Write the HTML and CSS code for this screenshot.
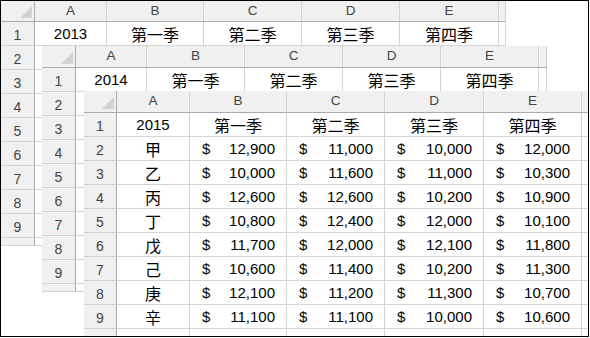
FILE: index.html
```html
<!DOCTYPE html>
<html lang="zh-Hant">
<head>
<meta charset="utf-8">
<title>Sheets</title>
<link rel="stylesheet" href="styles.css">
</head>
<body>
<div class="frame">

  <div class="sheet s1">
    <div class="corner"><svg viewBox="0 0 12 12" width="12" height="12"><polygon points="12,0 12,12 0,12" fill="#d3d3d3"/></svg></div>
    <div class="h">A</div><div class="h">B</div><div class="h">C</div><div class="h">D</div><div class="h">E</div><div class="h"></div>
    <div class="r">1</div><div class="c ctr">2013</div><div class="c ctr cjk">第一季</div><div class="c ctr cjk">第二季</div><div class="c ctr cjk">第三季</div><div class="c ctr cjk">第四季</div><div class="c"></div>
    <div class="r">2</div><div class="c"></div><div class="c"></div><div class="c"></div><div class="c"></div><div class="c"></div><div class="c"></div>
    <div class="r">3</div><div class="c"></div><div class="c"></div><div class="c"></div><div class="c"></div><div class="c"></div><div class="c"></div>
    <div class="r">4</div><div class="c"></div><div class="c"></div><div class="c"></div><div class="c"></div><div class="c"></div><div class="c"></div>
    <div class="r">5</div><div class="c"></div><div class="c"></div><div class="c"></div><div class="c"></div><div class="c"></div><div class="c"></div>
    <div class="r">6</div><div class="c"></div><div class="c"></div><div class="c"></div><div class="c"></div><div class="c"></div><div class="c"></div>
    <div class="r">7</div><div class="c"></div><div class="c"></div><div class="c"></div><div class="c"></div><div class="c"></div><div class="c"></div>
    <div class="r">8</div><div class="c"></div><div class="c"></div><div class="c"></div><div class="c"></div><div class="c"></div><div class="c"></div>
    <div class="r">9</div><div class="c"></div><div class="c"></div><div class="c"></div><div class="c"></div><div class="c"></div><div class="c"></div>
    <div class="r"></div><div class="c"></div><div class="c"></div><div class="c"></div><div class="c"></div><div class="c"></div><div class="c"></div>
  </div>

  <div class="sheet s2">
    <div class="corner"><svg viewBox="0 0 12 12" width="12" height="12"><polygon points="12,0 12,12 0,12" fill="#d3d3d3"/></svg></div>
    <div class="h">A</div><div class="h">B</div><div class="h">C</div><div class="h">D</div><div class="h">E</div><div class="h"></div>
    <div class="r">1</div><div class="c ctr">2014</div><div class="c ctr cjk">第一季</div><div class="c ctr cjk">第二季</div><div class="c ctr cjk">第三季</div><div class="c ctr cjk">第四季</div><div class="c"></div>
    <div class="r">2</div><div class="c"></div><div class="c"></div><div class="c"></div><div class="c"></div><div class="c"></div><div class="c"></div>
    <div class="r">3</div><div class="c"></div><div class="c"></div><div class="c"></div><div class="c"></div><div class="c"></div><div class="c"></div>
    <div class="r">4</div><div class="c"></div><div class="c"></div><div class="c"></div><div class="c"></div><div class="c"></div><div class="c"></div>
    <div class="r">5</div><div class="c"></div><div class="c"></div><div class="c"></div><div class="c"></div><div class="c"></div><div class="c"></div>
    <div class="r">6</div><div class="c"></div><div class="c"></div><div class="c"></div><div class="c"></div><div class="c"></div><div class="c"></div>
    <div class="r">7</div><div class="c"></div><div class="c"></div><div class="c"></div><div class="c"></div><div class="c"></div><div class="c"></div>
    <div class="r">8</div><div class="c"></div><div class="c"></div><div class="c"></div><div class="c"></div><div class="c"></div><div class="c"></div>
    <div class="r">9</div><div class="c"></div><div class="c"></div><div class="c"></div><div class="c"></div><div class="c"></div><div class="c"></div>
    <div class="r"></div><div class="c"></div><div class="c"></div><div class="c"></div><div class="c"></div><div class="c"></div><div class="c"></div>
  </div>

  <div class="sheet s3">
    <div class="corner"><svg viewBox="0 0 12 12" width="12" height="12"><polygon points="12,0 12,12 0,12" fill="#d3d3d3"/></svg></div>
    <div class="h">A</div><div class="h">B</div><div class="h">C</div><div class="h">D</div><div class="h">E</div><div class="h"></div>
    <div class="r">1</div><div class="c ctr">2015</div><div class="c ctr cjk">第一季</div><div class="c ctr cjk">第二季</div><div class="c ctr cjk">第三季</div><div class="c ctr cjk">第四季</div><div class="c"></div>
    <div class="r">2</div><div class="c ctr cjk">甲</div><div class="c acc"><span>$</span><span>12,900</span></div><div class="c acc"><span>$</span><span>11,000</span></div><div class="c acc"><span>$</span><span>10,000</span></div><div class="c acc"><span>$</span><span>12,000</span></div><div class="c"></div>
    <div class="r">3</div><div class="c ctr cjk">乙</div><div class="c acc"><span>$</span><span>10,000</span></div><div class="c acc"><span>$</span><span>11,600</span></div><div class="c acc"><span>$</span><span>11,000</span></div><div class="c acc"><span>$</span><span>10,300</span></div><div class="c"></div>
    <div class="r">4</div><div class="c ctr cjk">丙</div><div class="c acc"><span>$</span><span>12,600</span></div><div class="c acc"><span>$</span><span>12,600</span></div><div class="c acc"><span>$</span><span>10,200</span></div><div class="c acc"><span>$</span><span>10,900</span></div><div class="c"></div>
    <div class="r">5</div><div class="c ctr cjk">丁</div><div class="c acc"><span>$</span><span>10,800</span></div><div class="c acc"><span>$</span><span>12,400</span></div><div class="c acc"><span>$</span><span>12,000</span></div><div class="c acc"><span>$</span><span>10,100</span></div><div class="c"></div>
    <div class="r">6</div><div class="c ctr cjk">戊</div><div class="c acc"><span>$</span><span>11,700</span></div><div class="c acc"><span>$</span><span>12,000</span></div><div class="c acc"><span>$</span><span>12,100</span></div><div class="c acc"><span>$</span><span>11,800</span></div><div class="c"></div>
    <div class="r">7</div><div class="c ctr cjk">己</div><div class="c acc"><span>$</span><span>10,600</span></div><div class="c acc"><span>$</span><span>11,400</span></div><div class="c acc"><span>$</span><span>10,200</span></div><div class="c acc"><span>$</span><span>11,300</span></div><div class="c"></div>
    <div class="r">8</div><div class="c ctr cjk">庚</div><div class="c acc"><span>$</span><span>12,100</span></div><div class="c acc"><span>$</span><span>11,200</span></div><div class="c acc"><span>$</span><span>11,300</span></div><div class="c acc"><span>$</span><span>10,700</span></div><div class="c"></div>
    <div class="r">9</div><div class="c ctr cjk">辛</div><div class="c acc"><span>$</span><span>11,100</span></div><div class="c acc"><span>$</span><span>11,100</span></div><div class="c acc"><span>$</span><span>10,000</span></div><div class="c acc"><span>$</span><span>10,600</span></div><div class="c"></div>
    <div class="r"></div><div class="c"></div><div class="c"></div><div class="c"></div><div class="c"></div><div class="c"></div><div class="c"></div>
  </div>

</div>
</body>
</html>
```

FILE: styles.css
```css
html, body {
  margin: 0;
  padding: 0;
  background: #fff;
}

.frame {
  position: relative;
  width: 589px;
  height: 337px;
  box-sizing: border-box;
  border: 1px solid #000;
  overflow: hidden;
  background: #fff;
  font-family: "Liberation Sans", "Noto Sans CJK TC", sans-serif;
  color: #000;
}

.sheet {
  position: absolute;
  display: grid;
  background: #fff;
}

.s1 {
  left: 0;
  top: 0;
  grid-template-columns: 34px 72px 97px 98px 98px 99px 7px;
  grid-template-rows: 21px repeat(9, 24px) 8px;
}

.s2 {
  left: 41px;
  top: 45px;
  grid-template-columns: 34px 71px 98px 98px 98px 98px 8px;
  grid-template-rows: 22px repeat(9, 24px) 8px;
}

.s3 {
  left: 83px;
  top: 90px;
  grid-template-columns: 33px 73px 97px 98px 99px 98px 10px;
  grid-template-rows: 22px repeat(9, 24px) 10px;
}

.sheet > div {
  box-sizing: border-box;
  min-width: 0;
  overflow: hidden;
  white-space: nowrap;
}

.corner {
  background: #f0f0f0;
  border-right: 1px solid #ababab;
  border-bottom: 1px solid #ababab;
  display: flex;
  align-items: flex-end;
  justify-content: flex-end;
  padding: 0 2px 3px 0;
}

.corner svg {
  display: block;
}

.h {
  background: #f0f0f0;
  border-right: 1px solid #d0d0d0;
  border-bottom: 1px solid #ababab;
  font-size: 13.5px;
  color: #444;
  display: flex;
  align-items: center;
  justify-content: center;
  padding-bottom: 2px;
}

.r {
  background: #f0f0f0;
  border-right: 1px solid #ababab;
  border-bottom: 1px solid #d0d0d0;
  font-size: 14px;
  color: #444;
  display: flex;
  align-items: center;
  justify-content: center;
  padding-top: 3px;
}

.c {
  background: #fff;
  border-right: 1px solid #d4d4d4;
  border-bottom: 1px solid #d4d4d4;
  font-size: 15px;
  display: flex;
  align-items: center;
}

.ctr {
  justify-content: center;
}

.cjk {
  font-size: 16px;
}

.acc {
  justify-content: space-between;
  padding: 0 11px 0 12px;
}
```
